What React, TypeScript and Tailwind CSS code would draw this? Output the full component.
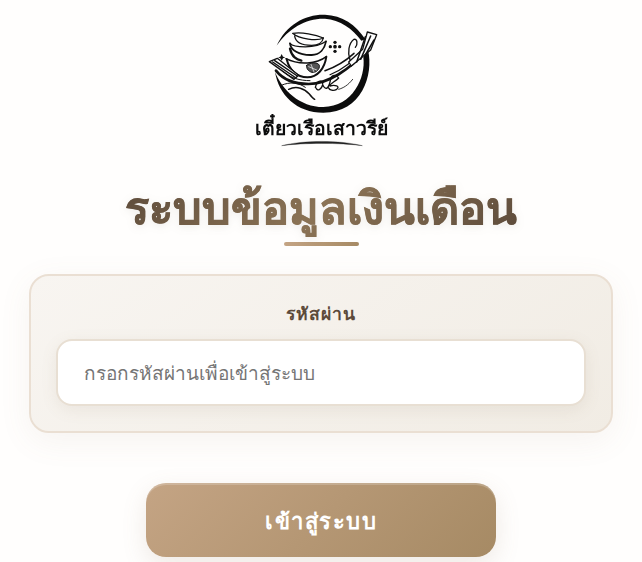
function Logo() {
  return (
    <svg width="170" height="155" viewBox="-12 0 510 465" className="block blur-[0.4px]">
      {/* ring */}
      <path d="M110,137 C140,72 198,42 255,44 C306,46 348,74 376,118 L364,122 C338,86 300,59 255,56 C200,54 146,84 110,137 Z" fill="#0c0c0c" />
      <path d="M384,150 C402,225 365,338 250,338 C170,338 116,285 105,215 C126,270 180,321 250,321 C338,321 378,232 370,172 Z" fill="#0c0c0c" />
      {/* bowls */}
      <g fill="none" stroke="#111" strokeLinecap="round" strokeLinejoin="round">
        <path d="M158,100 C185,96 226,103 250,114 C232,124 178,118 158,100 Z" fill="#fff" strokeWidth="4" />
        <path d="M164,108 C166,124 180,136 215,136 C236,136 248,126 250,114" strokeWidth="4" />
        <path d="M150,130 C160,142 226,148 258,124" strokeWidth="4" />
        <path d="M150,130 C152,150 176,166 215,165 C240,164 254,146 258,124" strokeWidth="5.5" />
        <path d="M150,146 C156,172 170,178 184,182" strokeWidth="7" />
        <path d="M138,176 C178,196 230,192 259,170" strokeWidth="4.5" />
        <path d="M140,178 C148,210 170,232 202,232 C232,232 254,206 259,170" strokeWidth="6" />
        <path d="M200,196 C208,187 234,185 238,196 C240,208 228,219 216,217 C206,215 198,206 200,196 Z" fill="#555" strokeWidth="3" />
        <path d="M206,200 L230,210 M213,193 L222,216" stroke="#fff" strokeWidth="2" />
      </g>
      {/* ornaments */}
      <g fill="#111">
        <circle cx="285" cy="127" r="5" /><circle cx="285" cy="154" r="5" /><circle cx="271" cy="140" r="5" /><circle cx="299" cy="140" r="5" /><circle cx="285" cy="140" r="5.5" />
        <path d="M125,162 L129,170 L136,172 L129,175 L125,182 L121,175 L114,172 L121,170 Z" />
      </g>
      <g fill="none" stroke="#111" strokeLinecap="round" strokeLinejoin="round">
        {/* left paddles */}
        <path d="M88,185 L112,175 L176,226 L162,238 Z" fill="#fff" strokeWidth="4" />
        <path d="M98,186 L168,234 M104,182 L172,228" strokeWidth="4.5" />
        {/* hull */}
        <path d="M108,212 C130,240 166,252 206,252 C262,252 330,210 378,150" strokeWidth="8" />
        <path d="M130,215 C150,234 180,242 210,242" strokeWidth="3" />
        <path d="M255,212 C290,200 320,180 342,160" strokeWidth="4.5" />
        <path d="M270,224 C305,210 340,184 364,152" strokeWidth="3.5" />
        {/* right paddles */}
        <path d="M382,96 L410,104 L392,150 L334,198 L326,186 L368,148 Z" fill="#fff" strokeWidth="4" />
        <path d="M376,110 L350,186 M392,108 L362,178 M402,120 L376,165" strokeWidth="4.5" />
        <path d="M330,180 C322,158 326,130 342,118 C352,116 354,132 346,142" strokeWidth="4" />
        {/* lettering */}
        <path d="M226,262 C232,238 250,240 248,254 C244,270 232,274 228,264 M248,254 C258,276 268,262 272,236 C276,222 290,224 296,234 C284,246 268,252 270,258 C284,254 302,258 290,268 C280,274 268,270 266,264" strokeWidth="4" />
        <path d="M296,268 C310,264 324,256 338,238" strokeWidth="2.5" />
        {/* waves */}
        <path d="M146,268 C170,256 194,266 208,282 C214,290 220,296 224,298" strokeWidth="4.5" />
        <path d="M124,256 C150,244 176,248 196,262" strokeWidth="3" />
      </g>
      <text x="243" y="404" textAnchor="middle" fontSize="58" fontWeight="800" fill="#0c0c0c" fontFamily="'Noto Sans',sans-serif">เตี๋ยวเรือเสาวรีย์</text>
      <path d="M125,437 C190,420 300,420 367,437 C300,428 190,428 125,437 Z" fill="#222" stroke="#222" strokeWidth="1" />
    </svg>
  );
}

export default function App() {
  return (
    <div className="h-[562px] overflow-hidden bg-[#fffefd] flex flex-col items-center font-['Noto_Sans','Liberation_Sans',sans-serif]">
      <Logo />
      <h1 className="mt-[22px] text-[45px] leading-[60px] font-black bg-[linear-gradient(135deg,#5c4a3a,#8b7355,#5c4a3a)] bg-clip-text text-transparent [-webkit-text-stroke:0.6px_transparent] drop-shadow-[0_2px_4px_rgba(92,74,58,0.1)]">ระบบข้อมูลเงินเดือน</h1>
      <div className="mt-[5px] w-[75px] h-1 rounded-full bg-[linear-gradient(90deg,#c4a484,#a68a64)]" />
      <div className="mt-[28px] w-[584px] h-[159px] rounded-[20px] border-2 border-[#eadfd3] bg-[linear-gradient(145deg,#f8f5f1,#f1ece4)] shadow-[0_8px_32px_rgba(139,115,85,0.08)] flex flex-col items-center px-[25px]">
        <label className="mt-[15px] text-[17.6px] leading-[44px] h-[48px] tracking-[1px] font-bold text-[#5c4a3a]">รหัสผ่าน</label>
        <input placeholder="กรอกรหัสผ่านเพื่อเข้าสู่ระบบ" className="w-full h-[67px] rounded-2xl border-2 border-[#e8dfd3] bg-white px-[26px] text-[19px] placeholder:text-[#757575] shadow-[0_4px_16px_rgba(139,115,85,0.1)] outline-none" />
      </div>
      <button className="mt-[50px] w-[350px] h-[74px] shrink-0 rounded-[20px] bg-[linear-gradient(135deg,#c4a484,#a68a64)] text-white text-[22px] tracking-[1.5px] font-bold shadow-[0_8px_24px_rgba(139,115,85,0.15),inset_0_2px_0_rgba(255,255,255,0.2)]">เข้าสู่ระบบ</button>
    </div>
  );
}
